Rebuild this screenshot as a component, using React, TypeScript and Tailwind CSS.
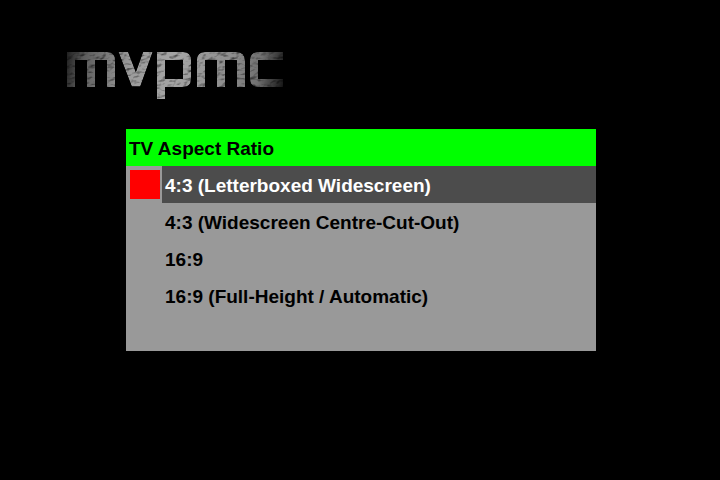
const options = [
  "4:3 (Letterboxed Widescreen)",
  "4:3 (Widescreen Centre-Cut-Out)",
  "16:9",
  "16:9 (Full-Height / Automatic)",
];

function Logo() {
  return (
    <svg
      role="img"
      aria-label="mvpmc"
      width="220"
      height="49"
      viewBox="66 52 220 49"
      fill="none"
    >
      <defs>
        <linearGradient id="metal" gradientUnits="userSpaceOnUse" x1="67" y1="52" x2="283" y2="90">
          <stop offset="0" stopColor="#202020" />
          <stop offset="0.08" stopColor="#5c5c5c" />
          <stop offset="0.3" stopColor="#9c9c9c" />
          <stop offset="0.5" stopColor="#a4a4a4" />
          <stop offset="0.75" stopColor="#8c8c8c" />
          <stop offset="0.88" stopColor="#707070" />
          <stop offset="1" stopColor="#141414" />
        </linearGradient>
        {/* Embossed noise gives the lettering its cracked stone surface. */}
        <filter id="stone" filterUnits="userSpaceOnUse" x="66" y="52" width="220" height="49" colorInterpolationFilters="sRGB">
          <feTurbulence type="fractalNoise" baseFrequency="0.14 0.24" numOctaves="3" seed="4" result="noise" />
          <feDiffuseLighting in="noise" surfaceScale="1.6" diffuseConstant="1.3" lightingColor="#ffffff" result="light">
            <feDistantLight azimuth="240" elevation="50" />
          </feDiffuseLighting>
          <feComposite in="light" in2="SourceGraphic" operator="arithmetic" k1="1" result="lit" />
          <feComposite in="lit" in2="SourceGraphic" operator="in" />
        </filter>
      </defs>
      <g filter="url(#stone)" stroke="url(#metal)" strokeWidth="8">
        <path d="M71 87V56H107Q111 56 111 60V87M91 56V87" />
        <path d="M121 46L136 85L150 46" strokeWidth="9" strokeLinejoin="bevel" />
        <path d="M161 99V56H183Q187 56 187 60V79Q187 83 183 83H161" />
        <path d="M201 87V60Q201 56 205 56H236Q241 56 241 61V87M221 56V87" />
        <path d="M283 56H258Q254 56 254 60V79Q254 83 258 83H283" />
      </g>
    </svg>
  );
}

export default function App() {
  return (
    <main className="min-h-screen bg-black font-['Liberation_Sans',Arial,sans-serif] text-[19px] font-bold text-black">
      <header className="pt-[52px] pl-[66px]">
        <Logo />
      </header>
      <div className="pt-7 pr-[124px] pl-[126px]">
        <section className="bg-[#999999] pb-[37px]" aria-labelledby="menu-title">
          <h1 id="menu-title" className="flex h-[37px] items-center bg-[#00ff00] px-[3px] pt-[3px]">
            TV Aspect Ratio
          </h1>
          <ul>
            {options.map((option, index) => (
              <li key={option} className="flex h-[37px]">
                <span className="flex w-9 shrink-0 items-center justify-center pl-0.5">
                  {index === 0 && <span className="h-[29px] w-[30px] bg-[#ff0000]" />}
                </span>
                <button
                  type="button"
                  aria-pressed={index === 0}
                  className="grow px-[3px] pt-[3px] text-left whitespace-nowrap aria-pressed:bg-[#4c4c4c] aria-pressed:text-white"
                >
                  {option}
                </button>
              </li>
            ))}
          </ul>
        </section>
      </div>
    </main>
  );
}
